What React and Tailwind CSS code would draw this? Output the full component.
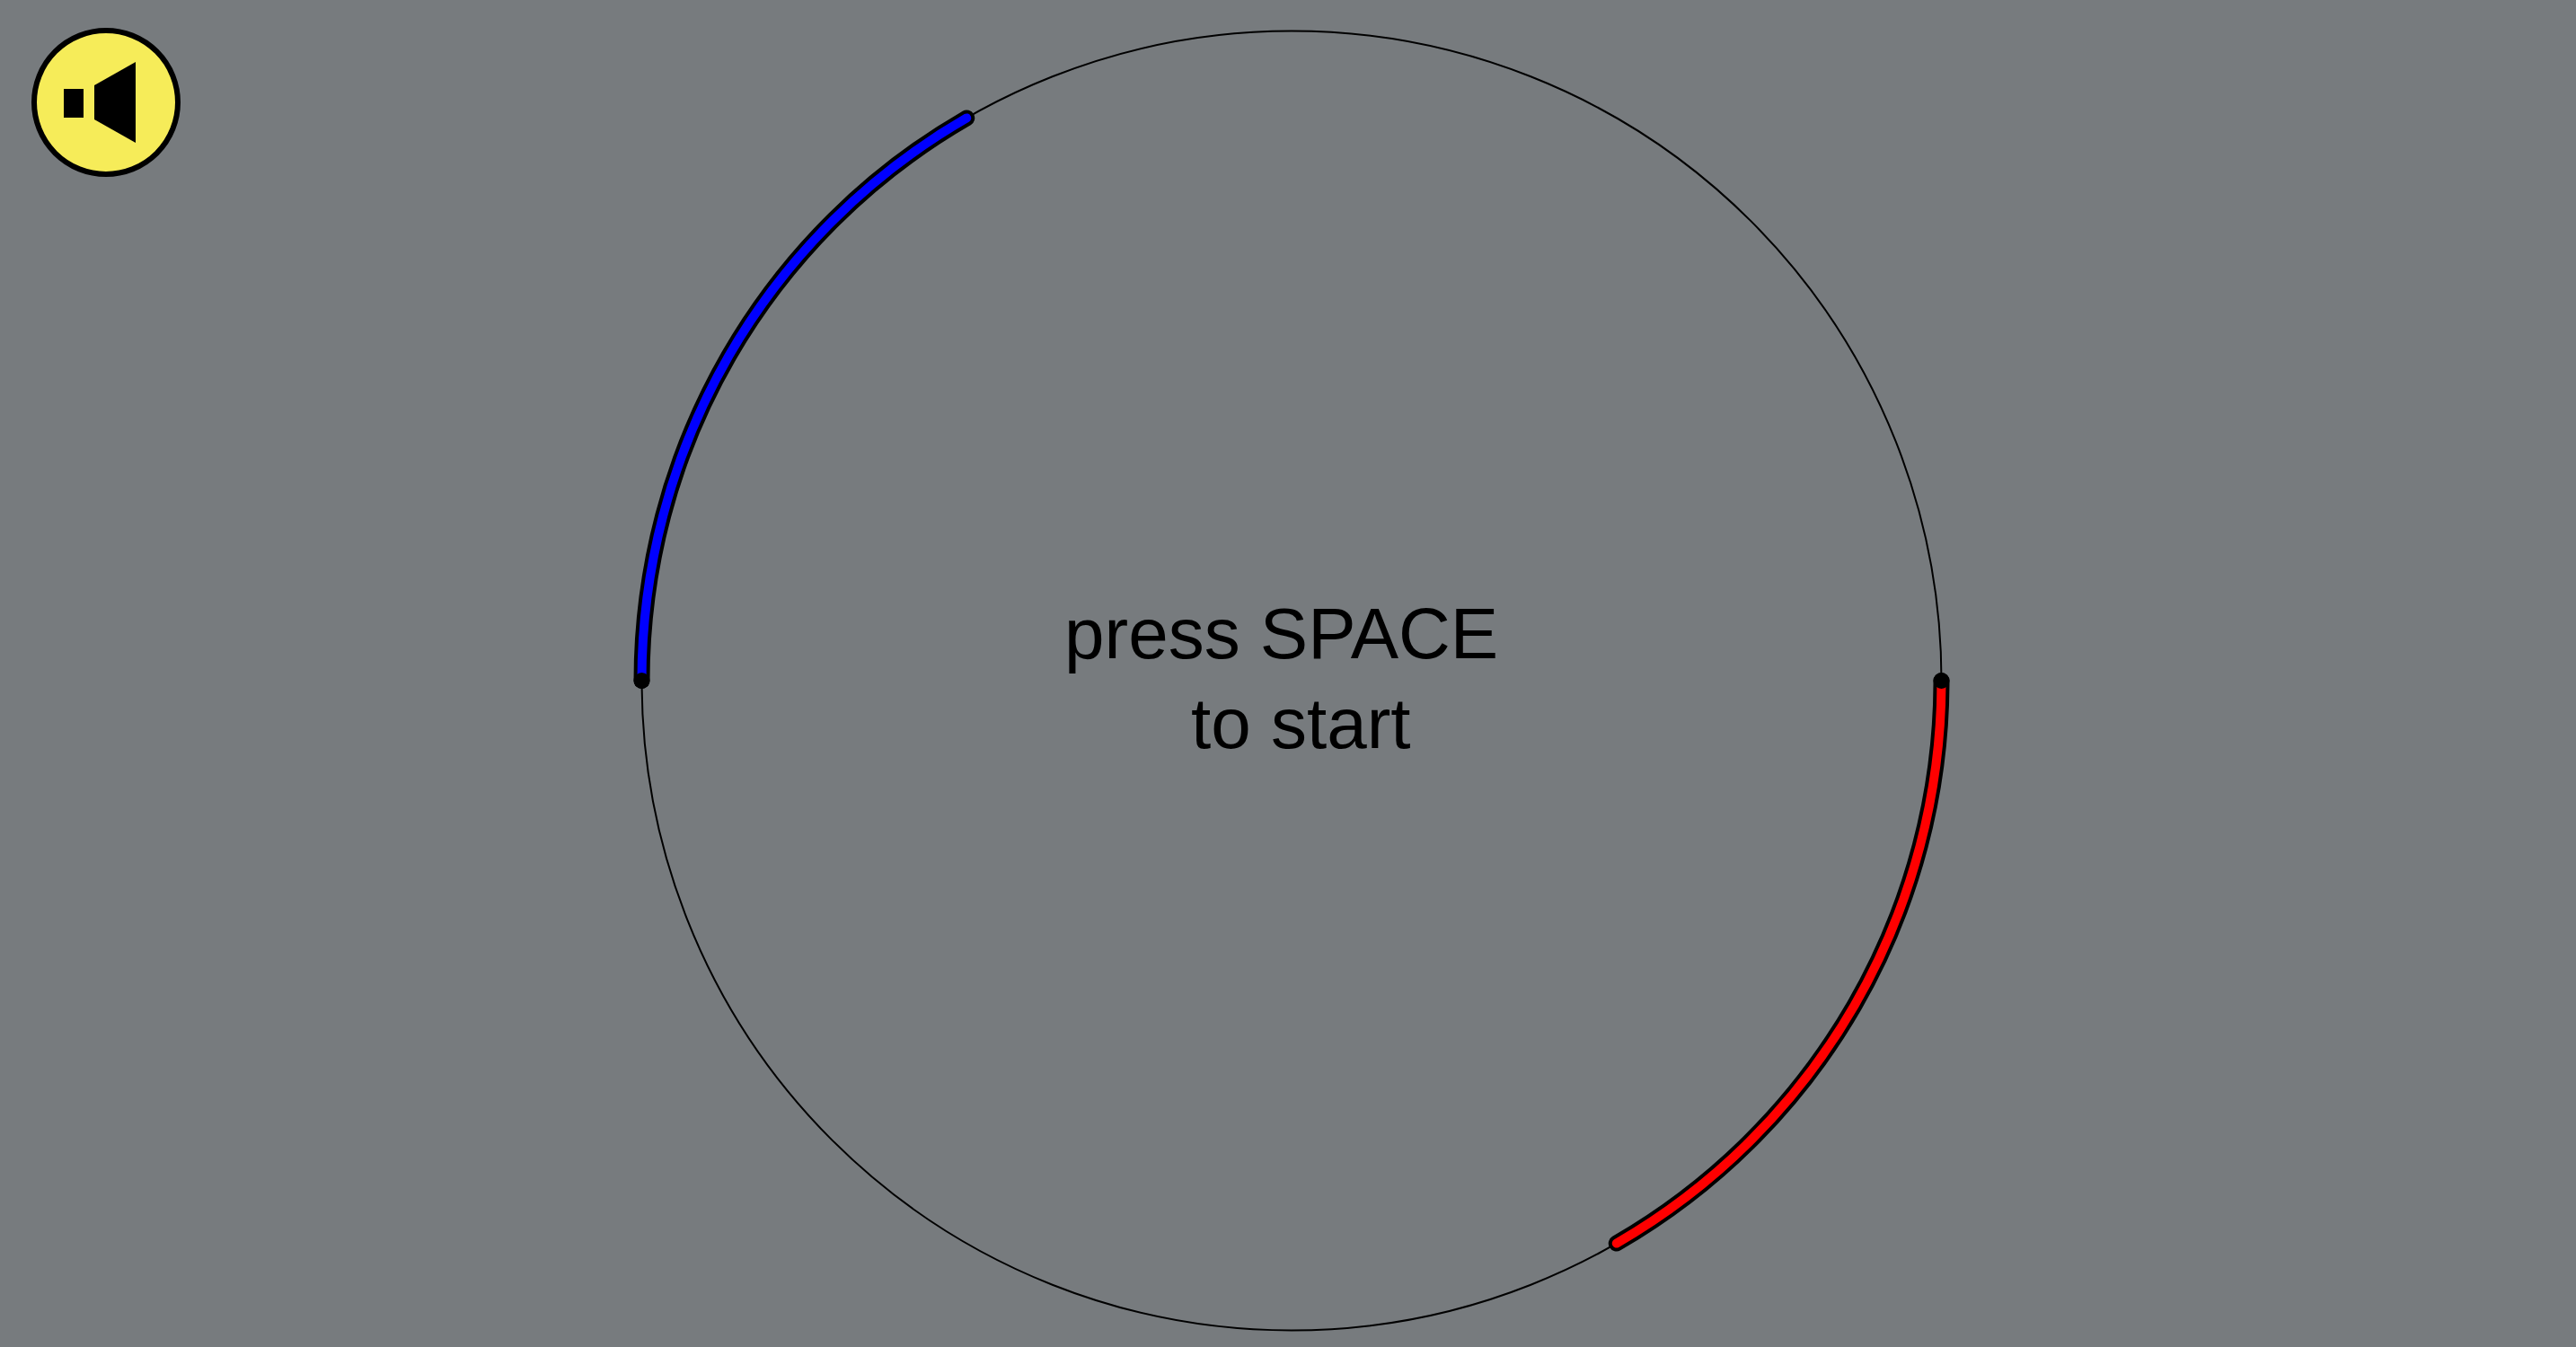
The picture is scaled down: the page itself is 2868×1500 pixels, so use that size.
const CX = 1438;
const CY = 758;
const R = 723.5;

// point on the ring, angle in degrees, clockwise from 3 o'clock
function pt(deg) {
  const a = (deg * Math.PI) / 180;
  return [CX + R * Math.cos(a), CY + R * Math.sin(a)];
}

function arcPath(from, to) {
  const [x1, y1] = pt(from);
  const [x2, y2] = pt(to);
  return `M ${x1} ${y1} A ${R} ${R} 0 0 1 ${x2} ${y2}`;
}

function Arc({ from, to, color }) {
  const d = arcPath(from, to);
  const [dx, dy] = pt(from);
  return (
    <g fill="none" strokeLinecap="round">
      <path d={d} stroke="#000" strokeWidth="18" />
      <path d={d} stroke={color} strokeWidth="10" />
      <circle cx={dx} cy={dy} r="9" fill="#000" />
    </g>
  );
}

function SoundButton() {
  return (
    <button className="block w-[166px] h-[166px] rounded-full border-[6px] border-black bg-[#f6ec59]">
      <svg viewBox="0 0 154 154" className="w-[154px] h-[154px]">
        <g transform="translate(-41 -37)" fill="#000">
          <rect x="71" y="99" width="22" height="32" />
          <polygon points="105,95 151,69 151,159 105,133" />
        </g>
      </svg>
    </button>
  );
}

export default function App() {
  return (
    <div className="relative w-full h-screen overflow-hidden bg-[#777b7e] pl-[35px] pt-[31px] font-['Liberation_Sans',Arial,sans-serif]">
      <svg className="absolute inset-0" width="2868" height="1500" viewBox="0 0 2868 1500">
        <circle cx={CX} cy={CY} r={R} fill="none" stroke="#000" strokeWidth="2" />
        <Arc from={180} to={240} color="#0000ff" />
        <Arc from={0} to={60} color="#ff0000" />
      </svg>

      <div className="relative">
        <SoundButton />
      </div>

      <div className="absolute left-[1185px] top-[656px] text-[80px] leading-[100px] text-black whitespace-pre">
        <div>press SPACE</div>
        <div className="ml-[141px]">to start</div>
      </div>
    </div>
  );
}
